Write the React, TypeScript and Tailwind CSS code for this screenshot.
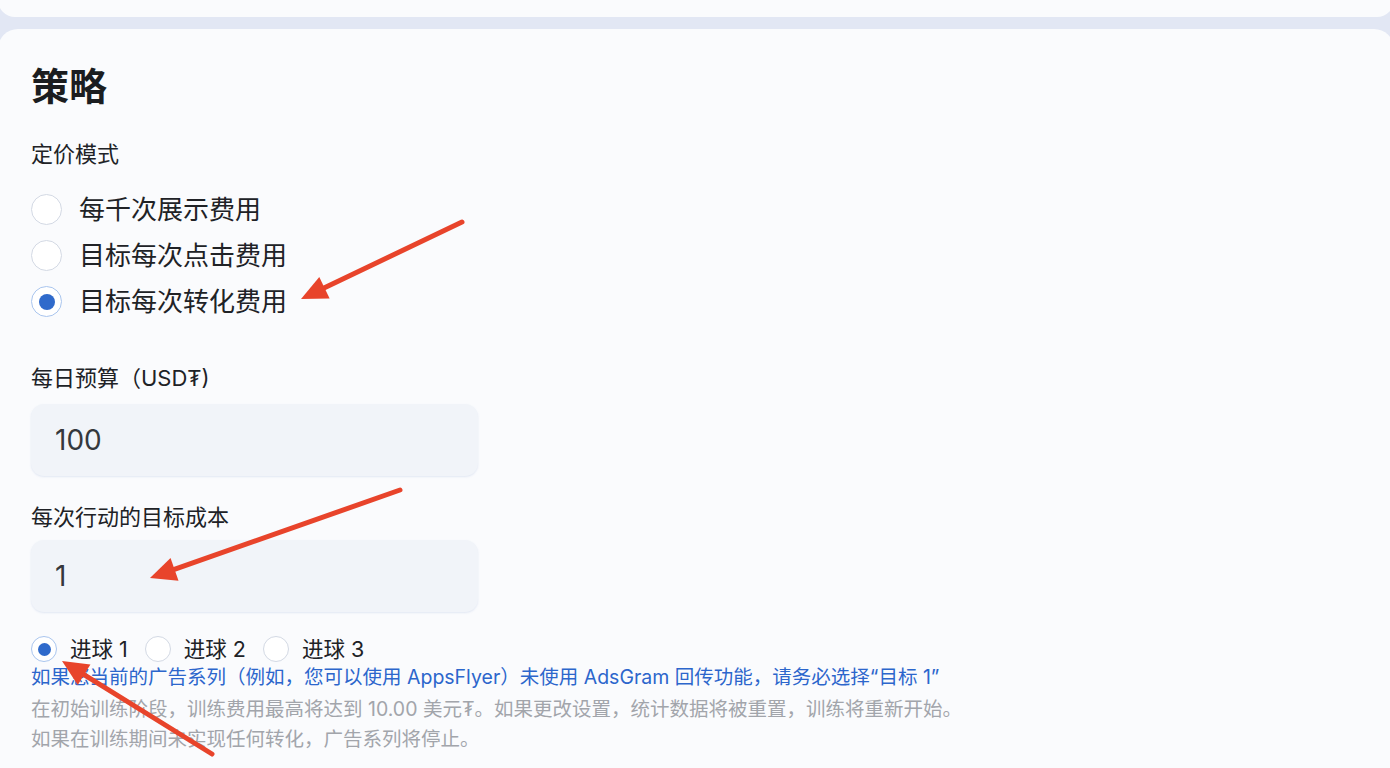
import { useState } from 'react';

const pricingModes = ['每千次展示费用', '目标每次点击费用', '目标每次转化费用'];
const goals = ['进球 1', '进球 2', '进球 3'];

const arrows = [
  { x1: 462, y1: 222, x2: 301, y2: 299 },
  { x1: 400, y1: 490, x2: 150, y2: 578 },
  { x1: 212, y1: 754, x2: 62, y2: 661 },
];

function Arrow({ x1, y1, x2, y2 }: { x1: number; y1: number; x2: number; y2: number }) {
  const dx = x2 - x1;
  const dy = y2 - y1;
  const len = Math.hypot(dx, dy);
  const ux = dx / len;
  const uy = dy / len;
  const head = 26;
  const half = 12;
  const bx = x2 - ux * head;
  const by = y2 - uy * head;
  const pts = `${x2},${y2} ${bx - uy * half},${by + ux * half} ${bx + uy * half},${by - ux * half}`;
  return (
    <g>
      <line x1={x1} y1={y1} x2={bx + ux * 4} y2={by + uy * 4} stroke="#e8442b" strokeWidth={5} strokeLinecap="round" />
      <polygon points={pts} fill="#e8442b" />
    </g>
  );
}

export default function App() {
  const [mode, setMode] = useState(2);
  const [goal, setGoal] = useState(0);

  return (
    <div
      className="relative h-[768px] w-[1390px] overflow-hidden bg-[#e2e7f4]"
      style={{ fontFamily: 'Inter, "Noto Sans CJK SC", sans-serif' }}
    >
      {/* previous card */}
      <div className="-ml-[2px] h-[17px] w-[1396px] rounded-b-[20px] bg-[#fafbfd]" />

      {/* strategy card */}
      <div className="-ml-[2px] mt-[12px] h-[800px] w-[1396px] rounded-t-[20px] bg-[#fafbfd] pl-[33px] pt-[33px]">
        <h2 className="text-[38px] font-bold leading-[48px] text-[#1b1d20]">策略</h2>

        <p className="mt-[29px] text-[22px] leading-[30px] text-[#202226]">定价模式</p>

        <div className="mt-[25px] flex flex-col gap-[15px]">
          {pricingModes.map((m, i) => (
            <button key={m} onClick={() => setMode(i)} className="flex h-[31px] items-center gap-[17px] text-left">
              <span
                className={`flex h-[31px] w-[31px] items-center justify-center rounded-full border ${
                  mode === i ? 'border-[#a9c5ee]' : 'border-[#d3d9e4]'
                } bg-white`}
              >
                {mode === i && <span className="h-[16px] w-[16px] rounded-full bg-[#2f6acb]" />}
              </span>
              <span className="text-[26px] leading-[31px] text-[#202226]">{m}</span>
            </button>
          ))}
        </div>

        <p className="mt-[46px] text-[22px] leading-[30px] text-[#202226]">每日预算（USD₮)</p>
        <div className="mt-[11px] flex h-[72px] w-[447px] items-center rounded-[13px] bg-[#f1f4f9] pl-[24px] shadow-[0_1px_2px_rgba(180,195,225,0.35)]">
          <span className="text-[28px] text-[#35383d]">100</span>
        </div>

        <p className="mt-[26px] text-[22px] leading-[30px] text-[#202226]">每次行动的目标成本</p>
        <div className="mt-[8px] flex h-[72px] w-[447px] items-center rounded-[13px] bg-[#f1f4f9] pl-[24px] shadow-[0_1px_2px_rgba(180,195,225,0.35)]">
          <span className="text-[28px] text-[#35383d]">1</span>
        </div>

        <div className="mt-[24px] flex h-[26px] items-center gap-[17px]">
          {goals.map((g, i) => (
            <button key={g} onClick={() => setGoal(i)} className="flex items-center gap-[13px]">
              <span
                className={`flex h-[26px] w-[26px] items-center justify-center rounded-full border ${
                  goal === i ? 'border-[#a9c5ee]' : 'border-[#d3d9e4]'
                } bg-white`}
              >
                {goal === i && <span className="h-[13px] w-[13px] rounded-full bg-[#2f6acb]" />}
              </span>
              <span className="text-[21.5px] leading-[26px] text-[#202226]">{g}</span>
            </button>
          ))}
        </div>

        <p className="mt-[1px] text-[19.5px] leading-[28px] text-[#2c66cc]">
          如果您当前的广告系列（例如，您可以使用 AppsFlyer）未使用 AdsGram 回传功能，请务必选择“目标 1”
        </p>
        <p className="mt-[3px] text-[19.5px] leading-[30px] text-[#a2a5ab]">
          在初始训练阶段，训练费用最高将达到 10.00 美元₮。如果更改设置，统计数据将被重置，训练将重新开始。
          <br />
          如果在训练期间未实现任何转化，广告系列将停止。
        </p>
      </div>

      {/* annotation arrows */}
      <svg className="pointer-events-none absolute left-0 top-0" width={1390} height={768}>
        {arrows.map((a, i) => (
          <Arrow key={i} {...a} />
        ))}
      </svg>
    </div>
  );
}
